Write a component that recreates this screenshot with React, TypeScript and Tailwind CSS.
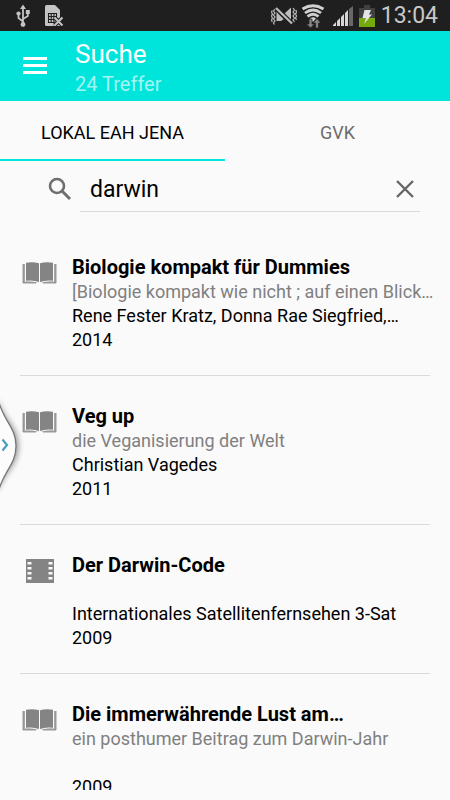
type Medium = "book" | "film"

type Hit = {
  title: string
  subtitle: string
  author: string
  year: string
  medium: Medium
}

const hits: Hit[] = [
  {
    title: "Biologie kompakt für Dummies",
    subtitle: "[Biologie kompakt wie nicht ; auf einen Blick…",
    author: "Rene Fester Kratz, Donna Rae Siegfried,…",
    year: "2014",
    medium: "book",
  },
  {
    title: "Veg up",
    subtitle: "die Veganisierung der Welt",
    author: "Christian Vagedes",
    year: "2011",
    medium: "book",
  },
  {
    title: "Der Darwin-Code",
    subtitle: "",
    author: "Internationales Satellitenfernsehen 3-Sat",
    year: "2009",
    medium: "film",
  },
  {
    title: "Die immerwährende Lust am…",
    subtitle: "ein posthumer Beitrag zum Darwin-Jahr",
    author: "",
    year: "2009",
    medium: "book",
  },
]

function UsbIcon() {
  return (
    <svg width="16" height="24" viewBox="0 0 16 24" fill="none" stroke="#c4c4c4" strokeWidth="1.8">
      <path d="M7 4v16M7 17.500L2.500 14V10M7 15l4.800-3V9" />
      <path d="M7 .5l3 4.500H4z" fill="#c4c4c4" stroke="none" />
      <circle cx="7" cy="20.500" r="2.400" fill="#c4c4c4" stroke="none" />
      <circle cx="2.500" cy="9.500" r="2.100" fill="#c4c4c4" stroke="none" />
      <path d="M9.800 6h4v4h-4z" fill="#c4c4c4" stroke="none" />
    </svg>
  )
}

function SimIcon() {
  return (
    <svg width="20" height="24" viewBox="0 0 20 24">
      <path d="M1 2.500Q1 1 2.500 1H11l5 5v16H2.500Q1 22 1 20.500z" fill="#c4c4c4" />
      <path d="M4.500 9.500h8v9h-8zM7.200 9.500v9M9.900 9.500v9M4.500 12.500h8M4.500 15.500h8" fill="none" stroke="#1f1f1f" strokeWidth="1.100" />
      <path d="M10.500 13.500l8 8M18.500 13.500l-8 8" stroke="#1f1f1f" strokeWidth="4" />
      <path d="M10.500 13.500l8 8M18.500 13.500l-8 8" stroke="#c4c4c4" strokeWidth="2.100" />
    </svg>
  )
}

function MuteIcon() {
  return (
    <svg width="26" height="20" viewBox="0 0 26 20" fill="none" stroke="#bdbdbd">
      <path d="M5.500 5H10l3 3 7-6.500v17L13 13l-3 2H5.500z" fill="#bdbdbd" stroke="none" />
      <path d="M5 2l16 16" stroke="#1f1f1f" strokeWidth="5" />
      <path d="M5 2l16 15.500" strokeWidth="2.200" />
      <path
        d="M4 3L2.500 5 4 7 2.500 9 4 11l-1.500 2L4 15l-1.500 2 1 1.500M1.300 4.500L.5 6l.9 2-.9 2 .9 2-.9 2 .8 2M22 2l1.500 2L22 6l1.500 2-1.500 2 1.500 2-1.500 2 1.500 2M24.800 4l.7 2-.9 2 .9 2-.9 2 .9 2"
        strokeWidth="1.200"
      />
    </svg>
  )
}

function WifiIcon() {
  return (
    <svg width="24" height="24" viewBox="0 0 24 24" fill="none" stroke="#d0d0d0" strokeWidth="2.800">
      <path d="M1.500 5Q12-1.500 22.500 5M4 9Q12 3 20 9M6.500 12.500Q12 8 17.500 12.500" />
      <path d="M9 14.500Q12 12 15 14.500L12 18z" fill="#d0d0d0" stroke="none" />
      <path d="M8 15v5H5.500L9.500 24l4-4H11v-5zM14.500 24v-5H12l4-4.500L20 19h-2.500v5z" fill="#858585" stroke="#1f1f1f" strokeWidth=".7" />
    </svg>
  )
}

function SignalIcon() {
  return (
    <svg width="20" height="20" viewBox="0 0 20 20">
      <path d="M0 20v-1l3-3v4zM4 20v-5l3-3v8z" fill="#d6d6d6" />
      <path d="M8 20v-9l3-3v12zM12 20V7l3-3v16z" fill="#d6d6d6" />
      <path d="M16 20V3l4-3v20z" fill="#686868" />
    </svg>
  )
}

function BatteryIcon() {
  return (
    <svg width="16" height="22" viewBox="0 0 16 22">
      <path d="M5 0h6v3h5v19H0V3h5z" fill="#414141" />
      <path d="M0 13h16v9H0z" fill="#76a90b" />
      <path d="M5.500 5H12l-2 4.500h3L5 19l2-6H3.500z" fill="#e4e4e4" />
    </svg>
  )
}

function BookIcon() {
  return (
    <svg width="36" height="24" viewBox="0 0 36 24" fill="#848484">
      <path d="M1 3h2v17.500Q10 19.500 16.500 22H1z" fill="#a6a6a6" />
      <path d="M34 3h-2v17.500Q25 19.500 18.500 22H34z" fill="#a6a6a6" />
      <path d="M4 1.800Q11 .6 17 2.300v18.700Q11 18.800 4 19.800z" />
      <path d="M31 1.800Q24 .6 18 2.300v18.700Q24 18.800 31 19.800z" />
      <path d="M1 3v19h13M34 3v19H21" fill="none" stroke="#848484" strokeWidth=".8" />
    </svg>
  )
}

function FilmIcon() {
  return (
    <svg width="28" height="24" viewBox="0 0 28 24">
      <path d="M0 0h28v24H0z" fill="#848484" />
      <path
        d="M1.500 3h4v2.500h-4zM1.500 8h4v2.500h-4zM1.500 13h4v2.500h-4zM1.500 18h4v2.500h-4zM22.500 3h4v2.500h-4zM22.500 8h4v2.500h-4zM22.500 13h4v2.500h-4zM22.500 18h4v2.500h-4z"
        fill="#fafafa"
      />
    </svg>
  )
}

function StatusBar() {
  return (
    <div className="flex h-[31px] shrink-0 items-center justify-between bg-[#1f1f1f] pr-3 pl-4">
      <div className="flex items-center gap-3">
        <UsbIcon />
        <SimIcon />
      </div>
      <div className="flex items-center gap-1.5">
        <div className="flex items-center gap-1 pr-0.5">
          <MuteIcon />
          <WifiIcon />
        </div>
        <SignalIcon />
        <BatteryIcon />
        <span className="text-[23px] leading-[30px] text-[#c8c8c8]">13:04</span>
      </div>
    </div>
  )
}

function Header() {
  return (
    <header className="flex h-[70px] shrink-0 items-center gap-7 bg-[#00e5db] pl-[23px] text-white">
      <button type="button" aria-label="Menü">
        <svg width="24" height="18" viewBox="0 0 24 18" fill="#ffffff">
          <path d="M0 0h24v3H0zM0 7h24v3H0zM0 14h24v3H0z" />
        </svg>
      </button>
      <div className="pt-1">
        <h1 className="text-[26px] leading-[32px]">Suche</h1>
        <p className="text-[20px] leading-7 text-[#a3f5f1]">24 Treffer</p>
      </div>
    </header>
  )
}

function Tabs() {
  return (
    <nav className="flex h-[60px] shrink-0 text-[18px]">
      <button type="button" className="flex-1 border-b-2 border-[#00e5db] pt-1 text-black">
        LOKAL EAH JENA
      </button>
      <button type="button" className="flex-1 border-b-2 border-transparent pt-1 text-[#6c6c6c]">
        GVK
      </button>
    </nav>
  )
}

function SearchField() {
  return (
    <div className="flex shrink-0 pr-[30px] pl-12">
      <label htmlFor="query" aria-label="Suche" className="flex w-8 items-center pt-1">
        <svg width="24" height="24" viewBox="0 0 24 24" fill="none" stroke="#6e6e6e" strokeWidth="2.600">
          <circle cx="9" cy="9" r="7" />
          <path d="M14 14l8 8" strokeWidth="3" />
        </svg>
      </label>
      <div className="flex h-[51px] flex-1 items-center border-b border-[#dadada] pr-1.5 pl-2.5">
        <input
          id="query"
          type="text"
          defaultValue="darwin"
          className="h-10 min-w-0 flex-1 bg-transparent pt-1.5 text-[23px] text-black outline-none"
        />
        <button type="button" aria-label="Löschen" className="pt-1.5">
          <svg width="18" height="18" viewBox="0 0 18 18" stroke="#666666" strokeWidth="2.400">
            <path d="M1 1l16 16M17 1L1 17" />
          </svg>
        </button>
      </div>
    </div>
  )
}

function HitRow({ hit }: { hit: Hit }) {
  return (
    <li className="flex border-b border-[#dadada] pt-[27px] pb-[23px]">
      <div className="flex h-[38px] w-[52px] shrink-0 items-center">
        <div className="flex w-10 justify-center">{hit.medium === "book" ? <BookIcon /> : <FilmIcon />}</div>
      </div>
      <div className="min-w-0 flex-1 text-[18px] leading-6 whitespace-nowrap text-black">
        <h2 className="text-[20px] leading-[26px] font-bold">{hit.title}</h2>
        <p className="h-6 text-[#808080]">{hit.subtitle}</p>
        <p className="h-6">{hit.author}</p>
        <p className="h-6">{hit.year}</p>
      </div>
    </li>
  )
}

function DrawerHandle() {
  return (
    <button type="button" aria-label="Öffnen" className="absolute top-[396px] left-0">
      <svg width="30" height="100" viewBox="0 0 30 100" fill="none">
        <defs>
          <filter id="handle-shadow" x="-50%" y="-20%" width="220%" height="140%">
            <feGaussianBlur stdDeviation="3" />
          </filter>
        </defs>
        <path d="M-4 2C3 24 18 30 18 50S3 76-4 98z" fill="#000000" opacity=".45" filter="url(#handle-shadow)" />
        <path d="M-2 3C3 25 16 31 16 50S3 75-2 97z" fill="#fcfcfc" stroke="#777777" strokeWidth="1.300" />
        <path d="M2.500 43.500L7 49l-4.500 5.500" stroke="#4a9cc4" strokeWidth="2.200" />
      </svg>
    </button>
  )
}

export default function App() {
  return (
    <div className="relative flex h-screen flex-col overflow-hidden bg-[#fafafa] pb-2.5 font-[Roboto,sans-serif]">
      <StatusBar />
      <Header />
      <Tabs />
      <SearchField />
      <main className="mt-[15px] min-h-0 flex-1 overflow-hidden px-5">
        <ul>
          {hits.map((hit) => (
            <HitRow key={hit.title} hit={hit} />
          ))}
        </ul>
      </main>
      <DrawerHandle />
    </div>
  )
}
